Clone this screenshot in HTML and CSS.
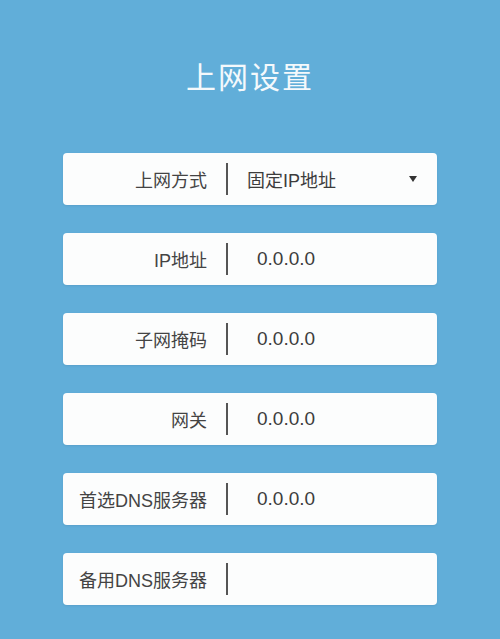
FILE: index.html
```html
<!DOCTYPE html>
<html lang="zh-CN">
<head>
    <meta charset="UTF-8">
    <title>上网设置</title>
    <link rel="stylesheet" href="styles.css">
</head>
<body>
    <div class="settings">
        <h1 class="settings-title">上网设置</h1>

        <div class="field">
            <span class="field-label">上网方式</span>
            <span class="field-sep"></span>
            <span class="field-value select-value">固定IP地址</span>
            <span class="caret"></span>
        </div>

        <div class="field">
            <span class="field-label">IP地址</span>
            <span class="field-sep"></span>
            <span class="field-value">0.0.0.0</span>
        </div>

        <div class="field">
            <span class="field-label">子网掩码</span>
            <span class="field-sep"></span>
            <span class="field-value">0.0.0.0</span>
        </div>

        <div class="field">
            <span class="field-label">网关</span>
            <span class="field-sep"></span>
            <span class="field-value">0.0.0.0</span>
        </div>

        <div class="field">
            <span class="field-label">首选DNS服务器</span>
            <span class="field-sep"></span>
            <span class="field-value">0.0.0.0</span>
        </div>

        <div class="field">
            <span class="field-label">备用DNS服务器</span>
            <span class="field-sep"></span>
            <span class="field-value"></span>
        </div>
    </div>
</body>
</html>
```

FILE: styles.css
```css
* {
    margin: 0;
    padding: 0;
    box-sizing: border-box;
    font-family: 'Liberation Sans', 'Noto Sans CJK SC', sans-serif;
}

body {
    background: #61aed9;
    min-height: 100vh;
}

.settings {
    width: 374px;
    margin: 0 auto;
    padding-top: 60px;
}

.settings-title {
    color: #f4f9fc;
    font-size: 30px;
    font-weight: 400;
    line-height: 36px;
    text-align: center;
    letter-spacing: 2px;
    margin-bottom: 57px;
}

.field {
    display: flex;
    align-items: center;
    height: 52px;
    background: #fcfdfd;
    border-radius: 4px;
    margin-bottom: 28px;
    box-shadow: 0 1px 2px rgba(40, 90, 130, 0.15);
}

.field-label {
    width: 144px;
    text-align: right;
    font-size: 18px;
    color: #444;
}

.field-sep {
    width: 2px;
    height: 32px;
    background: #555;
    margin: 0 19px;
}

.field-value {
    flex: 1;
    font-size: 19px;
    color: #3c3c3c;
    padding-left: 10px;
}

.select-value {
    padding-left: 0;
    font-size: 18px;
}

.caret {
    width: 0;
    height: 0;
    border-left: 4px solid transparent;
    border-right: 4px solid transparent;
    border-top: 6px solid #333;
    margin-right: 20px;
}
```
